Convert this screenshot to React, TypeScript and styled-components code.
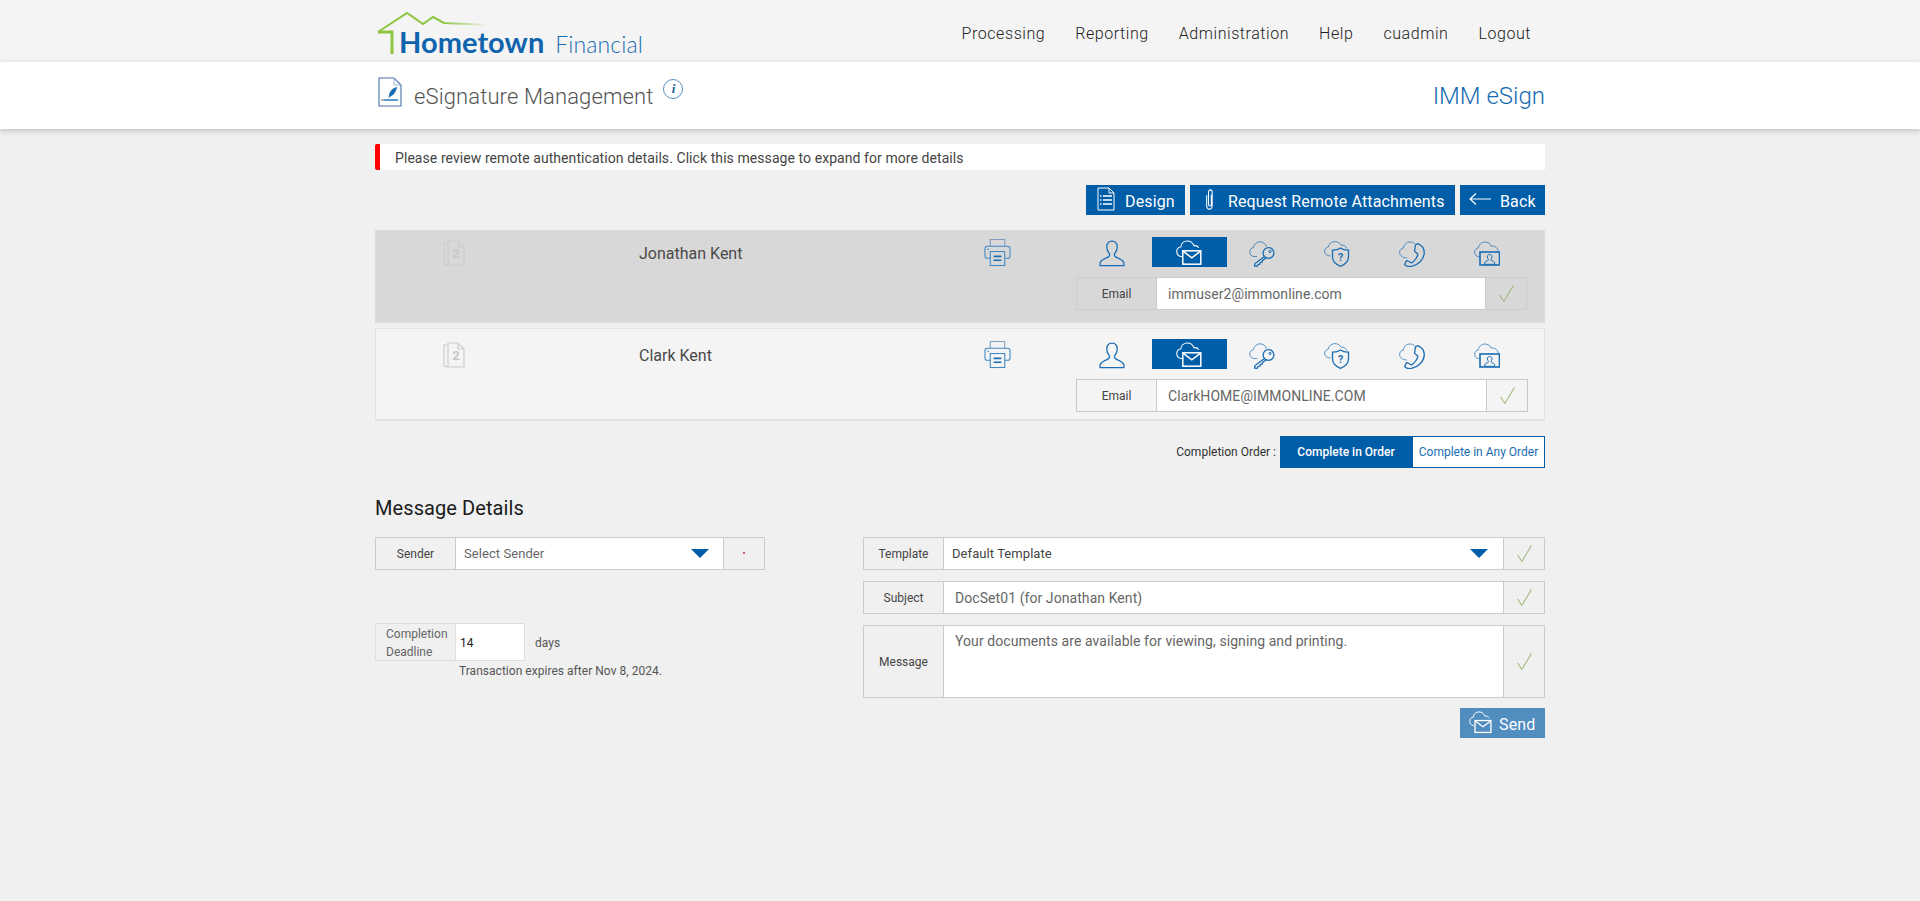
import React from "react";
import styled, { createGlobalStyle } from "styled-components";

const Global = createGlobalStyle`
  html, body { margin: 0; padding: 0; background: #f0f0f0; }
  body { font-family: Roboto, "Liberation Sans", sans-serif; color: #444; min-height: 901px; overflow: hidden; }
  * { box-sizing: border-box; }
`;

const Container = styled.div`
  width: 1170px;
  margin: 0 auto;
`;
const TopBar = styled.header`
  height: 62px;
  background: #f4f4f4;
`;
const TopInner = styled(Container)`
  height: 62px;
  display: flex;
  justify-content: space-between;
  align-items: center;
`;
const Logo = styled.div`
  position: relative;
  height: 62px;
  padding: 25px 0 0 24px;
  display: flex;
  align-items: baseline;
  white-space: nowrap;
`;
const LogoRoof = styled.svg`
  position: absolute;
  left: 0;
  top: 8px;
`;
const LogoBold = styled.span`
  font-family: Lato, sans-serif;
  font-weight: 700;
  font-size: 29px;
  line-height: 34px;
  letter-spacing: 0.05px;
  color: #0f64ad;
`;
const LogoLight = styled.span`
  font-family: Lato, sans-serif;
  font-weight: 300;
  font-size: 23px;
  line-height: 34px;
  letter-spacing: 0.12px;
  color: #1a6db3;
  margin-left: 11px;
`;
const Nav = styled.nav`
  display: flex;
  gap: 30px;
  padding-right: 14px;
  padding-top: 4px;
`;
const NavItem = styled.a`
  font-size: 16px;
  font-weight: 300;
  letter-spacing: 0.56px;
  color: #222;
`;
const Band = styled.div`
  height: 67px;
  background: #fff;
  box-shadow: 0 2px 6px rgba(0, 0, 0, 0.2);
`;
const BandInner = styled(Container)`
  height: 67px;
  display: flex;
  align-items: flex-start;
  justify-content: space-between;
  padding-top: 15px;
`;
const PageTitle = styled.div`
  display: flex;
  align-items: flex-start;
  padding-left: 3px;
`;
const TitleText = styled.h1`
  margin: 5px 0 0 12px;
  font-size: 22px;
  line-height: 30px;
  font-weight: 300;
  letter-spacing: 0.12px;
  color: #555;
`;
const InfoBadge = styled.span`
  width: 20px;
  height: 20px;
  margin: 2px 0 0 10px;
  border: 1px solid #5a8fc0;
  border-radius: 50%;
  display: flex;
  align-items: center;
  justify-content: center;
  font-family: "Liberation Serif", serif;
  font-style: italic;
  font-weight: 700;
  font-size: 13px;
  color: #1b5e9b;
`;
const Brand = styled.div`
  font-size: 24px;
  font-weight: 300;
  line-height: 30px;
  margin-top: 4px;
  color: #156ab0;
`;
const Content = styled(Container)`
  padding-top: 15px;
`;
const Alert = styled.div`
  height: 26px;
  background: #fff;
  border-left: 5px solid #f00;
  border-radius: 2px 0 0 2px;
  padding-left: 15px;
  font-size: 14px;
  line-height: 28px;
  letter-spacing: 0.07px;
  color: #444;
`;
const Toolbar = styled.div`
  display: flex;
  justify-content: flex-end;
  gap: 5px;
  margin-top: 15px;
`;
const ActionButton = styled.button<{ $faded?: boolean; $width: number; $left: number; $gap: number }>`
  width: ${(p) => p.$width}px;
  height: 30px;
  border: 0;
  padding: 0 0 0 ${(p) => p.$left}px;
  display: flex;
  align-items: center;
  gap: ${(p) => p.$gap}px;
  background: ${(p) => (p.$faded ? "#528dbf" : "#005da8")};
  color: #fff;
  font-family: Roboto, sans-serif;
  font-size: 16px;
  font-weight: 400;
  letter-spacing: 0.14px;
  white-space: nowrap;
  svg {
    margin-bottom: 2px;
  }
`;
const ButtonText = styled.span`
  margin-top: 3px;
`;
const Signer = styled.section<{ $selected?: boolean }>`
  display: grid;
  grid-template-columns: 156px 318px 69px 157px 1fr;
  height: 93px;
  margin-top: ${(p) => (p.$selected ? "15px" : "5px")};
  padding: ${(p) => (p.$selected ? "6px 17px 0 0" : "10px 16px 0 0")};
  background: ${(p) => (p.$selected ? "#d8d8d8" : "#f4f4f4")};
  border: 1px solid ${(p) => (p.$selected ? "#dcdcdc" : "#e4e4e4")};
  border-bottom-width: 2px;
`;
const DocCell = styled.div`
  display: flex;
  justify-content: center;
`;
const SignerName = styled.div`
  font-size: 16px;
  line-height: 24px;
  padding: 5px 0 0 107px;
  color: #4a4a4a;
`;
const PrintCell = styled.div`
  grid-column: 4;
  display: flex;
  justify-content: center;
  padding-top: 1px;
`;
const AuthCell = styled.div`
  grid-column: 5;
  display: flex;
  flex-direction: column;
`;
const AuthTabs = styled.div`
  display: flex;
  height: 30px;
  margin-left: 1px;
`;
const AuthTab = styled.div<{ $active?: boolean }>`
  width: 75px;
  height: 30px;
  padding: ${(p) => (p.$active ? "1px 2px 0 0" : "3px 5px 0 0")};
  display: flex;
  align-items: center;
  justify-content: center;
  background: ${(p) => (p.$active ? "#005da8" : "transparent")};
  color: ${(p) => (p.$active ? "#fff" : "#1a6db3")};
`;
const Field = styled.div<{ $h?: number; $top?: number; $tone?: string }>`
  display: flex;
  height: ${(p) => p.$h ?? 33}px;
  margin-top: ${(p) => p.$top ?? 0}px;
  border: 1px solid ${(p) => p.$tone ?? "#ccc"};
`;
const FieldLabel = styled.div`
  flex: 0 0 80px;
  display: flex;
  align-items: center;
  justify-content: center;
  text-align: center;
  font-size: 12px;
  line-height: 18px;
  color: #444;
  border-right: 1px solid #ccc;
`;
const FieldValue = styled.div<{ $top?: boolean; $dark?: boolean; $size?: number; $inset?: number }>`
  flex: 1;
  min-width: 0;
  display: flex;
  align-items: ${(p) => (p.$top ? "flex-start" : "center")};
  justify-content: space-between;
  padding: ${(p) => (p.$top ? "7px 0 0" : "0")};
  padding-left: ${(p) => p.$inset ?? 11}px;
  background: #fff;
  font-size: ${(p) => p.$size ?? 14}px;
  color: ${(p) => (p.$dark ? "#444" : "#666")};
  letter-spacing: 0.07px;
`;
const CheckBox = styled.div`
  flex: 0 0 41px;
  display: flex;
  align-items: center;
  justify-content: center;
  border-left: 1px solid #ccc;
`;
const OrderRow = styled.div`
  display: flex;
  justify-content: flex-end;
  align-items: center;
  margin-top: 15px;
  height: 32px;
`;
const OrderLabel = styled.span`
  font-size: 12px;
  color: #333;
  margin-right: 4px;
`;
const OrderOption = styled.div<{ $on?: boolean }>`
  height: 32px;
  width: ${(p) => (p.$on ? 132 : 133)}px;
  display: flex;
  align-items: center;
  justify-content: center;
  font-size: 12px;
  font-weight: ${(p) => (p.$on ? 500 : 400)};
  background: ${(p) => (p.$on ? "#005da8" : "#fff")};
  color: ${(p) => (p.$on ? "#fff" : "#1a6db3")};
  border: 1px solid #005da8;
`;
const SectionTitle = styled.h2`
  margin: 28px 0 0;
  font-size: 20px;
  line-height: 24px;
  font-weight: 400;
  letter-spacing: 0.08px;
  color: #1a1a1a;
`;
const Columns = styled.div`
  display: flex;
  justify-content: space-between;
  margin-top: 17px;
`;
const LeftColumn = styled.div`
  width: 390px;
`;
const RightColumn = styled.div`
  width: 682px;
`;
const Caret = styled.span<{ $right: number }>`
  width: 0;
  height: 0;
  margin-right: ${(p) => p.$right}px;
  border-left: 9px solid transparent;
  border-right: 9px solid transparent;
  border-top: 9px solid #005da8;
`;
const MiniButton = styled.div`
  flex: 0 0 41px;
  display: flex;
  align-items: center;
  justify-content: center;
  border-left: 1px solid #ccc;
`;
const MiniDot = styled.span`
  width: 2px;
  height: 2px;
  margin-bottom: 2px;
  background: #c25a7c;
`;
const DeadlineRow = styled.div`
  display: flex;
  align-items: center;
  margin-top: 53px;
`;
const DeadlineLabel = styled.div`
  width: 81px;
  height: 38px;
  border: 1px solid #ddd;
  padding: 1px 0 0 10px;
  font-size: 12px;
  line-height: 18px;
  color: #666;
`;
const DeadlineInput = styled.div`
  width: 69px;
  height: 38px;
  border: 1px solid #ddd;
  border-left: 0;
  background: #fff;
  padding: 1px 0 0 4px;
  font-size: 12px;
  line-height: 36px;
  color: #222;
`;
const Days = styled.span`
  margin: 2px 0 0 10px;
  font-size: 12px;
  color: #555;
`;
const Note = styled.div`
  margin: 3px 0 0 84px;
  font-size: 12px;
  line-height: 15px;
  letter-spacing: 0.03px;
  color: #555;
`;
const SendRow = styled.div`
  display: flex;
  justify-content: flex-end;
  margin-top: 10px;
`;

const Blue = "currentColor";

const CloudLine = ({ d, light = true }: { d: string; light?: boolean }) => (
  <path d={d} fill="none" stroke={Blue} strokeWidth={light ? 0.95 : 1.1} opacity={light ? 0.75 : 1} />
);

const UserIcon = () => (
  <svg width="26" height="27" viewBox="0 0 26 27" fill="none" stroke={Blue} strokeWidth="1.3">
    <path d="M13 1.200c-3.600 0-5.400 2.600-5.200 6 .1 2.200.9 4.400 2.200 5.900.6.800.5 2.600-.2 3.400-1.500 1.600-7.800 2.600-8.600 6.200-.3 1.200-.1 2.900-.1 2.900h23.800s.2-1.700-.1-2.900c-.8-3.600-7.100-4.600-8.600-6.200-.7-.8-.8-2.600-.2-3.400 1.300-1.500 2.100-3.700 2.200-5.900.2-3.400-1.600-6-5.200-6z" />
  </svg>
);
const MailCloudIcon = ({ size = 26 }: { size?: number }) => (
  <svg width={size} height={size} viewBox="0 0 26 26" fill="none" stroke={Blue}>
    <CloudLine light={false} d="M6 16.500H5C2.300 16.500 .8 14 .8 11.500c0-2.400 1.700-4.300 3.900-4.500C5.200 3.400 8 1 11.200 1c3.200 0 5.700 1.900 6.800 4.800 1.700-.4 3.600.3 4.800 2" />
    <rect x="6.800" y="10.800" width="18" height="13.400" strokeWidth="1.500" fill="none" />
    <path d="M7 11.200l8.800 6.600 8.800-6.600" strokeWidth="1.500" />
  </svg>
);
const KeyCloudIcon = () => (
  <svg width="26" height="26" viewBox="0 0 26 26" fill="none" stroke={Blue}>
    <CloudLine d="M8 15.500H5C2 15.500 .8 13 .8 10.800c0-2.400 1.700-4 3.700-4.200C5 3 8 .8 11 .8c3 0 5.500 1.700 6.500 5" />
    <circle cx="19.500" cy="12" r="5.400" strokeWidth="1.300" />
    <circle cx="21" cy="10.500" r="1.100" strokeWidth="1" />
    <path d="M15.500 15.500L6 22.500l-.5 2.500 2.500.4 1.200-2 1.800-.2.300-1.800 1.800-.2.400-1.700 4.200-3" strokeWidth="1.300" />
  </svg>
);
const ShieldCloudIcon = () => (
  <svg width="26" height="26" viewBox="0 0 26 26" fill="none" stroke={Blue}>
    <CloudLine d="M6.500 15C2.800 15 .6 13 .6 10.300c0-2.400 1.700-4 3.700-4.300C4.800 2.800 7.500.6 10.800.6c2.700 0 5 1.300 6.200 3.500 2.600-.3 4.900 1 5.800 3.300" />
    <path d="M16.500 7c2 1.500 5 2.300 8 2.200v6.600c0 4.200-3.200 7.600-8 9.600-4.800-2-8-5.400-8-9.600V9.200c3 .1 6-.7 8-2.200z" strokeWidth="1.300" />
    <text x="16.500" y="20" textAnchor="middle" fontFamily="Roboto, sans-serif" fontWeight="700" fontSize="10.500" fill={Blue} stroke="none">?</text>
  </svg>
);
const PhoneCloudIcon = () => (
  <svg width="26" height="26" viewBox="0 0 26 26" fill="none" stroke={Blue}>
    <CloudLine d="M8 17C3.500 17 .6 14.500 .6 11.500c0-2.400 1.700-4.200 3.800-4.500C4.900 3.400 7.700 1 11 1c1.800 0 3.500.6 4.800 1.700" />
    <path d="M16.500 3.800l2.300-1.200c3.700 1.500 6.700 5 6.400 10-.4 5.800-6.200 11.800-12.700 12.800-3 .4-5.700-.3-6.800-1.800l1.300-3c.5-.9 1.200-1 2-.6l2.600 1.500c.8.400 1.500.3 2.100-.2 2-1.700 4.200-4.600 5-7 .3-.9 0-1.500-.6-1.900l-2-1.600c-.6-.5-.7-1.100-.4-1.800z" strokeWidth="1.300" />
  </svg>
);
const VideoCloudIcon = () => (
  <svg width="26" height="26" viewBox="0 0 26 26" fill="none" stroke={Blue}>
    <CloudLine d="M6 15.500H4.500C2 15.500 .6 13.300 .6 11.200c0-2.300 1.700-3.900 3.700-4.200C4.800 3.600 7.500 1 10.900 1c3 0 5.400 1.600 6.400 4.200 3-.6 6.200 1.200 7 5" />
    <rect x="6" y="11" width="19.500" height="13" strokeWidth="1.600" />
    <path d="M15.700 13.500c-1.600 0-2.400 1.100-2.300 2.500.1 1 .5 1.700 1 2.200.2.500.1 1-.3 1.200-1 .6-3 .9-3.400 2.400v1.500h10V21.800c-.4-1.500-2.400-1.800-3.400-2.400-.4-.2-.5-.7-.3-1.200.5-.5.9-1.200 1-2.200.1-1.400-.7-2.500-2.300-2.500z" strokeWidth="1" />
  </svg>
);
const PrinterIcon = () => (
  <svg width="27" height="29" viewBox="0 0 28 30" fill="none" stroke="#3f88c5" strokeWidth="1.100">
    <path d="M6.500 8.500V1.500h15v7" stroke="#7d9fbd" />
    <path d="M6.500 21H3.500C2.100 21 1 19.900 1 18.500V11c0-1.400 1.100-2.500 2.500-2.500h21c1.400 0 2.500 1.100 2.500 2.500v7.500c0 1.400-1.100 2.500-2.500 2.500h-3" />
    <rect x="6.500" y="14" width="15" height="14.500" />
    <path d="M10 19h8M10 23h8" strokeWidth="1.600" stroke="#1a6db3" />
    <rect x="3.500" y="11" width="1.400" height="1.400" fill="#3f88c5" stroke="none" />
  </svg>
);
const DocCountIcon = () => (
  <svg width="24" height="30" viewBox="0 0 24 30" fill="none" stroke="#cccccc" strokeWidth="1.200">
    <path d="M6 4h10l6 6v18H6z" />
    <path d="M6 6H2v21l4 1" />
    <path d="M16 4v6h6" />
    <text x="14" y="21" textAnchor="middle" fontFamily="Roboto, sans-serif" fontWeight="700" fontSize="13" fill="#c6c6c6" stroke="none">2</text>
  </svg>
);
const CheckIcon = () => (
  <svg width="17" height="19" viewBox="0 0 16 18" fill="none" stroke="#98b676" strokeWidth="0.950">
    <path d="M1.500 10.500L5.500 16.500 14.500 1.500" />
  </svg>
);
const ListDocIcon = () => (
  <svg width="18" height="24" viewBox="0 0 18 24" fill="none" stroke="#fff" strokeWidth="1">
    <path d="M1 1h11l5 5v17H1z" />
    <path d="M12 1v5h5" />
    <path d="M6 9h9M6 13h9M6 17h9" strokeWidth="1.400" />
    <path d="M3 9h1.500M3 13h1.500M3 17h1.500" strokeWidth="1.400" />
  </svg>
);
const ClipIcon = () => (
  <svg width="10" height="21" viewBox="0 0 10 24" fill="none" stroke="#fff" strokeWidth="1.200">
    <path d="M6.500 6.500v11c0 1.300-.7 2-1.600 2s-1.600-.7-1.600-2V4c0-1.800.7-3 1.900-3s2.300 1.200 2.300 3v14.500c0 2.800-1.300 4.500-3.100 4.500S1.200 21.300 1.200 18.500V7" />
  </svg>
);
const BackArrow = () => (
  <svg width="22" height="14" viewBox="0 0 22 14" fill="none" stroke="#fff" strokeWidth="1.200">
    <path d="M22 7H1M7 1.500L1 7l6 5.500" />
  </svg>
);
const PenDocIcon = () => (
  <svg width="24" height="30" viewBox="0 0 24 30" fill="none">
    <path d="M1 1h15l7 7v21H1z" stroke="#4a6fa8" strokeWidth="1.100" />
    <path d="M16 1v7h7" stroke="#9ab5d2" strokeWidth="1" />
    <path d="M11 19c0-4 3-8 8-9-.5 4-3 8-6.500 9.500L10 21z" fill="#1a6db3" />
    <path d="M6 23h14" stroke="#1a6db3" strokeWidth="1.400" />
    <path d="M3.500 22l2 2M5.500 22l-2 2" stroke="#555" strokeWidth=".7" />
  </svg>
);

const Check = () => (
  <CheckBox>
    <CheckIcon />
  </CheckBox>
);

const SignerCard = ({ name, email, selected }: { name: string; email: string; selected?: boolean }) => (
  <Signer $selected={selected}>
    <DocCell>
      <DocCountIcon />
    </DocCell>
    <SignerName>{name}</SignerName>
    <PrintCell>
      <PrinterIcon />
    </PrintCell>
    <AuthCell>
      <AuthTabs>
        <AuthTab><UserIcon /></AuthTab>
        <AuthTab $active><MailCloudIcon /></AuthTab>
        <AuthTab><KeyCloudIcon /></AuthTab>
        <AuthTab><ShieldCloudIcon /></AuthTab>
        <AuthTab><PhoneCloudIcon /></AuthTab>
        <AuthTab><VideoCloudIcon /></AuthTab>
      </AuthTabs>
      <Field $top={10} $tone={selected ? "#cdcdcd" : "#c8c8c8"}>
        <FieldLabel>Email</FieldLabel>
        <FieldValue>{email}</FieldValue>
        <Check />
      </Field>
    </AuthCell>
  </Signer>
);

export default function App() {
  return (
    <>
      <Global />
      <TopBar>
        <TopInner>
          <Logo>
            <LogoRoof width="190" height="50" viewBox="0 0 190 50" fill="none">
              <defs>
                <linearGradient id="roofFade" x1="0" x2="1" y1="0" y2="0">
                  <stop offset="0" stopColor="#8cc540" />
                  <stop offset="0.6" stopColor="#8cc540" />
                  <stop offset="1" stopColor="#8cc540" stopOpacity="0" />
                </linearGradient>
              </defs>
              <path d="M3 24L32 5l16 11 10-7 11 6 43 2" stroke="url(#roofFade)" strokeWidth="2" />
              <path d="M3 24h14v22" stroke="#8cc540" strokeWidth="3" />
            </LogoRoof>
            <LogoBold>Hometown</LogoBold>
            <LogoLight>Financial</LogoLight>
          </Logo>
          <Nav>
            <NavItem>Processing</NavItem>
            <NavItem>Reporting</NavItem>
            <NavItem>Administration</NavItem>
            <NavItem>Help</NavItem>
            <NavItem>cuadmin</NavItem>
            <NavItem>Logout</NavItem>
          </Nav>
        </TopInner>
      </TopBar>
      <Band>
        <BandInner>
          <PageTitle>
            <PenDocIcon />
            <TitleText>eSignature Management</TitleText>
            <InfoBadge>i</InfoBadge>
          </PageTitle>
          <Brand>IMM eSign</Brand>
        </BandInner>
      </Band>
      <Content>
        <Alert>Please review remote authentication details. Click this message to expand for more details</Alert>
        <Toolbar>
          <ActionButton $width={99} $left={11} $gap={10}><ListDocIcon /><ButtonText>Design</ButtonText></ActionButton>
          <ActionButton $width={265} $left={15} $gap={13}><ClipIcon /><ButtonText>Request Remote Attachments</ButtonText></ActionButton>
          <ActionButton $width={85} $left={9} $gap={9}><BackArrow /><ButtonText>Back</ButtonText></ActionButton>
        </Toolbar>
        <SignerCard name="Jonathan Kent" email="immuser2@immonline.com" selected />
        <SignerCard name="Clark Kent" email="ClarkHOME@IMMONLINE.COM" />
        <OrderRow>
          <OrderLabel>Completion Order :</OrderLabel>
          <OrderOption $on>Complete in Order</OrderOption>
          <OrderOption>Complete in Any Order</OrderOption>
        </OrderRow>
        <SectionTitle>Message Details</SectionTitle>
        <Columns>
          <LeftColumn>
            <Field>
              <FieldLabel>Sender</FieldLabel>
              <FieldValue $size={13} $inset={8}>Select Sender<Caret $right={14} /></FieldValue>
              <MiniButton><MiniDot /></MiniButton>
            </Field>
            <DeadlineRow>
              <DeadlineLabel>Completion Deadline</DeadlineLabel>
              <DeadlineInput>14</DeadlineInput>
              <Days>days</Days>
            </DeadlineRow>
            <Note>Transaction expires after Nov 8, 2024.</Note>
          </LeftColumn>
          <RightColumn>
            <Field>
              <FieldLabel>Template</FieldLabel>
              <FieldValue $dark $size={13} $inset={8}>Default Template<Caret $right={15} /></FieldValue>
              <Check />
            </Field>
            <Field $top={11}>
              <FieldLabel>Subject</FieldLabel>
              <FieldValue>DocSet01 (for Jonathan Kent)</FieldValue>
              <Check />
            </Field>
            <Field $top={11} $h={73}>
              <FieldLabel>Message</FieldLabel>
              <FieldValue $top>Your documents are available for viewing, signing and printing.</FieldValue>
              <Check />
            </Field>
            <SendRow>
              <ActionButton $faded $width={85} $left={9} $gap={7}>
                <MailCloudIcon size={23} />
                <ButtonText>Send</ButtonText>
              </ActionButton>
            </SendRow>
          </RightColumn>
        </Columns>
      </Content>
    </>
  );
}
